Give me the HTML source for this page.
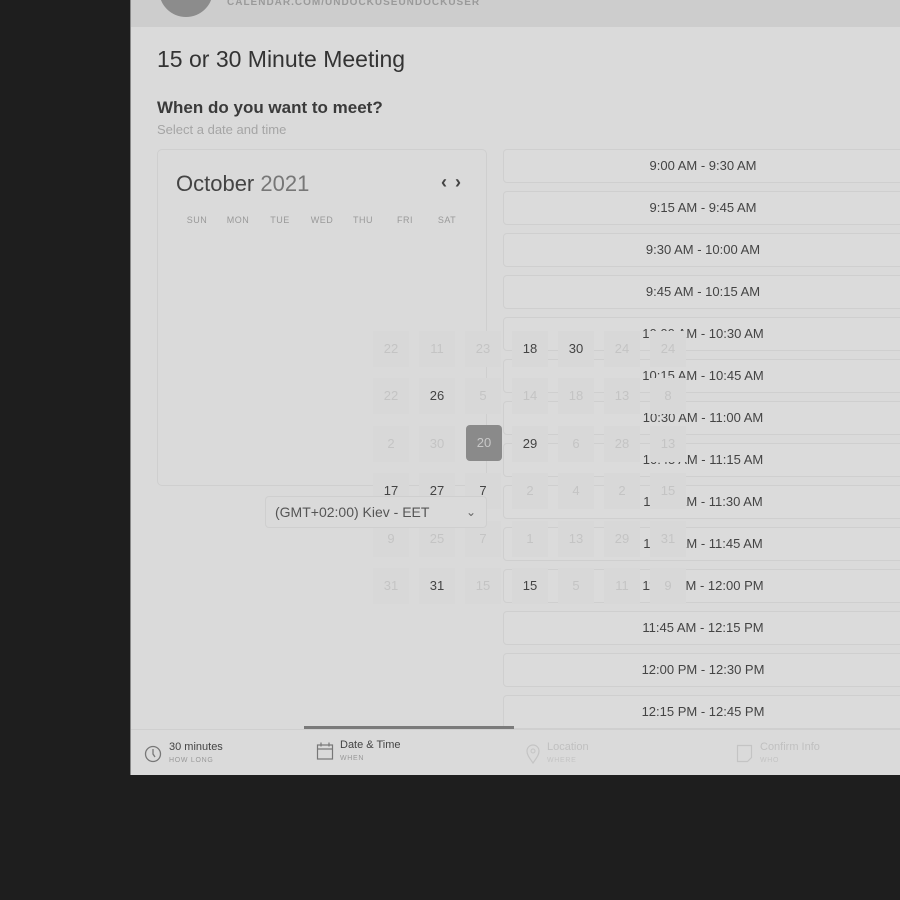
<!DOCTYPE html>
<html><head><style>
*{margin:0;padding:0;box-sizing:border-box}
body{width:900px;height:900px;background:#1e1e1e;font-family:"Liberation Sans",sans-serif;position:relative;overflow:hidden}
.a{position:absolute}
#panel{left:130px;top:0;width:770px;height:775px;background:#dadada;border-left:1px solid #888}
.slot{position:absolute;left:503px;width:420px;height:34px;border:1px solid #cfcfcf;border-radius:4px;background:#dbdbdb;font-size:13px;color:#444;text-align:center;line-height:32px;padding-right:20px}
.c{position:absolute;width:36px;height:36px;text-align:center;line-height:36px;font-size:13px;color:#c4c4c4;background:#d8d8d8}
.d{color:#444}
.s{background:#8a8a8a;color:#c8c8c8;border-radius:4px}
.dow{position:absolute;top:215px;font-size:9px;color:#999;letter-spacing:.5px;width:40px;text-align:center}
</style></head><body>
<div class="a" id="panel"></div>
<div class="a" style="left:131px;top:0;width:769px;height:27px;background:#cdcdcd"></div>
<div class="a" style="left:159px;top:-37px;width:54px;height:54px;border-radius:50%;background:#8c8c8c"></div>
<div class="a" style="left:227px;top:-3px;font-size:10px;font-weight:bold;letter-spacing:1px;color:#9a9a9a">CALENDAR.COM/UNDOCKUSEUNDOCKUSER</div>
<div class="a" style="left:157px;top:46px;font-size:23px;color:#333">15 or 30 Minute Meeting</div>
<div class="a" style="left:157px;top:98px;font-size:17px;font-weight:bold;color:#3a3a3a">When do you want to meet?</div>
<div class="a" style="left:157px;top:122px;font-size:13px;color:#a5a5a5">Select a date and time</div>
<div class="a" style="left:157px;top:149px;width:330px;height:337px;border:1px solid #cfcfcf;border-radius:5px"></div>
<div class="a" style="left:176px;top:171px;font-size:22px;color:#444">October <span style="color:#777">2021</span></div>
<div class="a" style="left:441px;top:172px;font-size:18px;font-weight:bold;color:#444;letter-spacing:8px">‹›</div>
<div class="dow" style="left:177px">SUN</div><div class="dow" style="left:218px">MON</div><div class="dow" style="left:260px">TUE</div><div class="dow" style="left:302px">WED</div><div class="dow" style="left:343px">THU</div><div class="dow" style="left:385px">FRI</div><div class="dow" style="left:427px">SAT</div>

<div class="slot" style="top:149px">9:00 AM - 9:30 AM</div>
<div class="slot" style="top:191px">9:15 AM - 9:45 AM</div>
<div class="slot" style="top:233px">9:30 AM - 10:00 AM</div>
<div class="slot" style="top:275px">9:45 AM - 10:15 AM</div>
<div class="slot" style="top:317px">10:00 AM - 10:30 AM</div>
<div class="slot" style="top:359px">10:15 AM - 10:45 AM</div>
<div class="slot" style="top:401px">10:30 AM - 11:00 AM</div>
<div class="slot" style="top:443px">10:45 AM - 11:15 AM</div>
<div class="slot" style="top:485px">11:00 AM - 11:30 AM</div>
<div class="slot" style="top:527px">11:15 AM - 11:45 AM</div>
<div class="slot" style="top:569px">11:30 AM - 12:00 PM</div>
<div class="slot" style="top:611px">11:45 AM - 12:15 PM</div>
<div class="slot" style="top:653px">12:00 PM - 12:30 PM</div>
<div class="slot" style="top:695px">12:15 PM - 12:45 PM</div>

<div class="c" style="left:373px;top:331px">22</div><div class="c" style="left:419px;top:331px">11</div><div class="c" style="left:465px;top:331px">23</div><div class="c d" style="left:512px;top:331px">18</div><div class="c d" style="left:558px;top:331px">30</div><div class="c" style="left:604px;top:331px">24</div><div class="c" style="left:650px;top:331px">24</div>
<div class="c" style="left:373px;top:378px">22</div><div class="c d" style="left:419px;top:378px">26</div><div class="c" style="left:465px;top:378px">5</div><div class="c" style="left:512px;top:378px">14</div><div class="c" style="left:558px;top:378px">18</div><div class="c" style="left:604px;top:378px">13</div><div class="c" style="left:650px;top:378px">8</div>
<div class="c" style="left:373px;top:426px">2</div><div class="c" style="left:419px;top:426px">30</div><div class="c s" style="left:466px;top:425px">20</div><div class="c d" style="left:512px;top:426px">29</div><div class="c" style="left:558px;top:426px">6</div><div class="c" style="left:604px;top:426px">28</div><div class="c" style="left:650px;top:426px">13</div>
<div class="c d" style="left:373px;top:473px">17</div><div class="c d" style="left:419px;top:473px">27</div><div class="c d" style="left:465px;top:473px">7</div><div class="c" style="left:512px;top:473px">2</div><div class="c" style="left:558px;top:473px">4</div><div class="c" style="left:604px;top:473px">2</div><div class="c" style="left:650px;top:473px">15</div>
<div class="c" style="left:373px;top:521px">9</div><div class="c" style="left:419px;top:521px">25</div><div class="c" style="left:465px;top:521px">7</div><div class="c" style="left:512px;top:521px">1</div><div class="c" style="left:558px;top:521px">13</div><div class="c" style="left:604px;top:521px">29</div><div class="c" style="left:650px;top:521px">31</div>
<div class="c" style="left:373px;top:568px">31</div><div class="c d" style="left:419px;top:568px">31</div><div class="c" style="left:465px;top:568px">15</div><div class="c d" style="left:512px;top:568px">15</div><div class="c" style="left:558px;top:568px">5</div><div class="c" style="left:604px;top:568px">11</div><div class="c" style="left:650px;top:568px">9</div>

<div class="a" style="left:265px;top:496px;width:222px;height:32px;border:1px solid #cfcfcf;border-radius:4px;background:#dadada;font-size:14px;color:#555;line-height:30px;padding-left:9px;overflow:hidden;white-space:nowrap">(GMT+02:00) Kiev - EET<span style="position:absolute;left:200px;top:0;font-size:12px;color:#666">&#8964;</span></div>

<div class="a" style="left:131px;top:729px;width:769px;height:1px;background:#cfcfcf"></div>
<div class="a" style="left:304px;top:726px;width:210px;height:3px;background:#7a7a7a"></div>
<svg class="a" style="left:144px;top:744px" width="18" height="20"><circle cx="9" cy="10" r="7.5" fill="none" stroke="#777" stroke-width="1.3"/><path d="M9 5v5l2 3" fill="none" stroke="#777" stroke-width="1.3"/></svg>
<div class="a" style="left:169px;top:741px;font-size:11px;color:#444">30 minutes</div>
<div class="a" style="left:169px;top:757px;font-size:7px;color:#999;letter-spacing:.7px">HOW LONG</div>
<svg class="a" style="left:316px;top:741px" width="18" height="20"><rect x="1.5" y="4" width="15" height="14" fill="none" stroke="#777" stroke-width="1.2"/><path d="M1.5 8h15M5 1.5v4M13 1.5v4" stroke="#777" stroke-width="1.2"/></svg>
<div class="a" style="left:340px;top:739px;font-size:11px;color:#444">Date &amp; Time</div>
<div class="a" style="left:340px;top:755px;font-size:7px;color:#999;letter-spacing:.7px">WHEN</div>
<svg class="a" style="left:525px;top:744px" width="16" height="20"><path d="M8 19C3 12 2 10 2 7a6 6 0 0112 0c0 3-1 5-6 12z" fill="none" stroke="#c4c4c4" stroke-width="1.2"/><circle cx="8" cy="7" r="2" fill="none" stroke="#c4c4c4"/></svg>
<div class="a" style="left:547px;top:741px;font-size:11px;color:#c0c0c0">Location</div>
<div class="a" style="left:547px;top:757px;font-size:7px;color:#c4c4c4;letter-spacing:.7px">WHERE</div>
<svg class="a" style="left:736px;top:744px" width="18" height="20"><path d="M1.5 1.5h14v12l-4 4h-10z" fill="none" stroke="#c4c4c4" stroke-width="1.2"/></svg>
<div class="a" style="left:760px;top:741px;font-size:11px;color:#c0c0c0">Confirm Info</div>
<div class="a" style="left:760px;top:757px;font-size:7px;color:#c4c4c4;letter-spacing:.7px">WHO</div>
</body></html>
